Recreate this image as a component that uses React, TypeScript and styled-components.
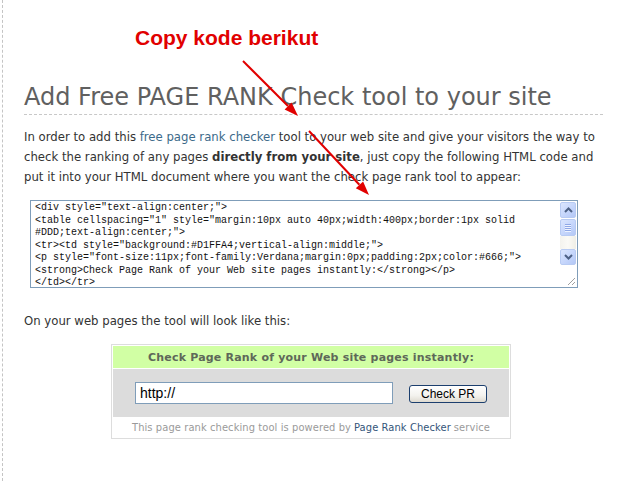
import React from "react";
import styled, { createGlobalStyle } from "styled-components";

const GlobalStyle = createGlobalStyle`
  html, body {
    margin: 0;
    padding: 0;
    background: #fff;
  }
  body {
    font-family: "DejaVu Sans Condensed", "DejaVu Sans", sans-serif;
  }
`;

const tahoma = `"DejaVu Sans Condensed", "DejaVu Sans", sans-serif`;
const verdana = `"DejaVu Sans", Verdana, sans-serif`;

const Shell = styled.div`
  position: relative;
  width: 620px;
  height: 481px;
  overflow: hidden;
`;

const Page = styled.div`
  box-sizing: border-box;
  height: 481px;
  margin-left: 2px;
  border-left: 1px dashed #c4c4c4;
  padding: 82px 22px 0 21px;
  display: flex;
  flex-direction: column;
`;

const Title = styled.h1`
  margin: 0 -5px 0 0;
  padding: 0 0 2px;
  font-family: ${verdana};
  font-weight: normal;
  font-size: 24px;
  line-height: 30px;
  color: #606060;
  border-bottom: 1px dashed #c8c8c8;
  white-space: nowrap;
`;

const Text = styled.p<{ $top: number }>`
  margin: ${(p) => p.$top}px 0 0;
  font-family: ${tahoma};
  font-size: 13px;
  line-height: 20px;
  color: #333;
  white-space: nowrap;
`;

const Link = styled.a`
  color: #3c6a8a;
  text-decoration: none;
`;

const Strong = styled.strong`
  font-weight: bold;
  color: #333;
`;

// textarea with an XP looking scrollbar beside it
const CodeBox = styled.div`
  box-sizing: border-box;
  margin: 13px 0 0 6px;
  width: 548px;
  height: 88px;
  border: 1px solid #7f9db9;
  display: flex;
  background: #fff;
`;

const Code = styled.textarea`
  flex: 1;
  margin: 0;
  padding: 1px 4px 0 4px;
  border: none;
  outline: none;
  resize: none;
  overflow: hidden;
  font-family: "Liberation Mono", "Courier New", monospace;
  font-size: 10px;
  line-height: 12.5px;
  color: #111;
  background: transparent;
`;

const ScrollCol = styled.div`
  width: 16px;
  margin-right: 1px;
  display: flex;
  flex-direction: column;
  padding-top: 1px;
`;

const ScrollButton = styled.div`
  box-sizing: border-box;
  height: 16px;
  border: 1px solid #b8cbf3;
  border-radius: 2px;
  background: linear-gradient(135deg, #dbe6fe 0%, #c3d4fb 60%, #b4c8f6 100%);
  display: flex;
  align-items: center;
  justify-content: center;
`;

const Thumb = styled(ScrollButton)`
  height: 17px;
  margin-top: 1px;
  flex-direction: column;
  gap: 1px;
`;

const Grip = styled.span`
  display: block;
  width: 6px;
  height: 1px;
  background: #8fa8e6;
  box-shadow: 0 1px 0 #eef3ff;
`;

const Track = styled.div`
  flex: 1;
  background: linear-gradient(90deg, #f4f3ee, #fbfaf6 50%, #efeee6);
`;

const Corner = styled.div`
  height: 21px;
  display: flex;
  align-items: flex-end;
  justify-content: flex-end;
  padding: 0 0 1px;
`;

const Chevron = ({ up }: { up?: boolean }) => (
  <svg width="9" height="6" viewBox="0 0 9 6">
    <path
      d={up ? "M1 5 L4.5 1.5 L8 5" : "M1 1 L4.5 4.5 L8 1"}
      fill="none"
      stroke="#4d6185"
      strokeWidth="2"
    />
  </svg>
);

const ResizeGrip = () => (
  <svg width="10" height="10" viewBox="0 0 10 10">
    <path d="M9 2 L2 9 M9 6 L6 9" stroke="#a0a0a0" strokeWidth="1" />
  </svg>
);

// preview widget
const Widget = styled.div`
  box-sizing: border-box;
  width: 400px;
  margin: 13px auto 0;
  border: 1px solid #ddd;
  padding: 1px;
  display: flex;
  flex-direction: column;
  gap: 1px;
`;

const WidgetHead = styled.div`
  background: #d1ffa4;
  height: 22px;
  display: flex;
  align-items: center;
  justify-content: center;
  font-family: ${verdana};
  font-weight: bold;
  font-size: 11px;
  color: #5e6859;
  letter-spacing: 0.2px;
`;

const WidgetBody = styled.div`
  background: #dcdcdc;
  height: 48px;
  display: flex;
  align-items: flex-start;
  justify-content: center;
  gap: 16px;
  padding-top: 13px;
  box-sizing: border-box;
`;

const UrlInput = styled.input`
  box-sizing: border-box;
  width: 258px;
  height: 22px;
  margin: 0;
  padding: 0 4px;
  border: 1px solid #7f9db9;
  background: #fff;
  font-family: "Liberation Sans", Arial, sans-serif;
  font-size: 14px;
  color: #000;
  outline: none;
`;

const CheckButton = styled.button`
  box-sizing: border-box;
  width: 78px;
  height: 18px;
  margin-top: 3px;
  padding: 0;
  border: 1px solid #1c3f6e;
  border-radius: 3px;
  background: linear-gradient(#ffffff, #f3f2ee 60%, #dedad0);
  font-family: "Liberation Sans", Arial, sans-serif;
  font-size: 12px;
  color: #000;
`;

const WidgetFoot = styled.div`
  height: 19px;
  display: flex;
  align-items: center;
  justify-content: center;
  font-family: ${tahoma};
  font-size: 11px;
  color: #9a9a9a;
  white-space: nowrap;
  letter-spacing: 0.1px;
`;

const FootLink = styled.a`
  color: #34557a;
  text-decoration: none;
  margin: 0 3px;
`;

// red callout drawn over the page
const Overlay = styled.div`
  position: absolute;
  inset: 0;
  pointer-events: none;
`;

const Callout = styled.div`
  position: absolute;
  left: 135px;
  top: 27px;
  font-family: "Liberation Sans", Arial, sans-serif;
  font-weight: bold;
  font-size: 21px;
  line-height: 21px;
  color: #e10000;
  white-space: nowrap;
`;

const Arrows = styled.svg`
  position: absolute;
  left: 0;
  top: 0;
`;

const code = `<div style="text-align:center;">
<table cellspacing="1" style="margin:10px auto 40px;width:400px;border:1px solid #DDD;text-align:center;">
<tr><td style="background:#D1FFA4;vertical-align:middle;">
<p style="font-size:11px;font-family:Verdana;margin:0px;padding:2px;color:#666;">
<strong>Check Page Rank of your Web site pages instantly:</strong></p>
</td></tr>
<tr><td style="background:#DDD;padding:10px;">
<form action="http://www.prchecker.info/check_page_rank.php" method="post">
<input name="urlo" type="text" value="http://" style="width:250px;" />
<input type="submit" value="Check PR" />
</form>
</td></tr>
</table>
</div>`;

const App = () => {
  return (
    <Shell>
      <GlobalStyle />
      <Page>
        <Title>Add Free PAGE RANK Check tool to your site</Title>
        <Text $top={12}>
          In order to add this <Link href="#">free page rank checker</Link> tool to your web
          site and give your visitors the way to
          <br />
          check the ranking of any pages <Strong>directly from your site</Strong>, just copy
          the following HTML code and
          <br />
          put it into your HTML document where you want the check page rank tool to appear:
        </Text>
        <CodeBox>
          <Code readOnly value={code} spellCheck={false} />
          <ScrollCol>
            <ScrollButton>
              <Chevron up />
            </ScrollButton>
            <Thumb>
              <Grip />
              <Grip />
              <Grip />
              <Grip />
            </Thumb>
            <Track />
            <ScrollButton>
              <Chevron />
            </ScrollButton>
            <Corner>
              <ResizeGrip />
            </Corner>
          </ScrollCol>
        </CodeBox>
        <Text $top={23}>On your web pages the tool will look like this:</Text>
        <Widget>
          <WidgetHead>Check Page Rank of your Web site pages instantly:</WidgetHead>
          <WidgetBody>
            <UrlInput defaultValue="http://" />
            <CheckButton>Check PR</CheckButton>
          </WidgetBody>
          <WidgetFoot>
            This page rank checking tool is powered by
            <FootLink href="#">Page Rank Checker</FootLink>
            service
          </WidgetFoot>
        </Widget>
      </Page>
      <Overlay>
        <Callout>Copy kode berikut</Callout>
        <Arrows width="620" height="481" viewBox="0 0 620 481">
          <line x1="243" y1="61" x2="288" y2="106" stroke="#e10000" strokeWidth="2" />
          <polygon points="298,116 284.6,109.6 291.6,102.6" fill="#e10000" />
          <line x1="309" y1="131" x2="359.4" y2="184.8" stroke="#e10000" strokeWidth="2" />
          <polygon points="369,195 355.8,188.2 363.1,181.4" fill="#e10000" />
        </Arrows>
      </Overlay>
    </Shell>
  );
};

export default App;
